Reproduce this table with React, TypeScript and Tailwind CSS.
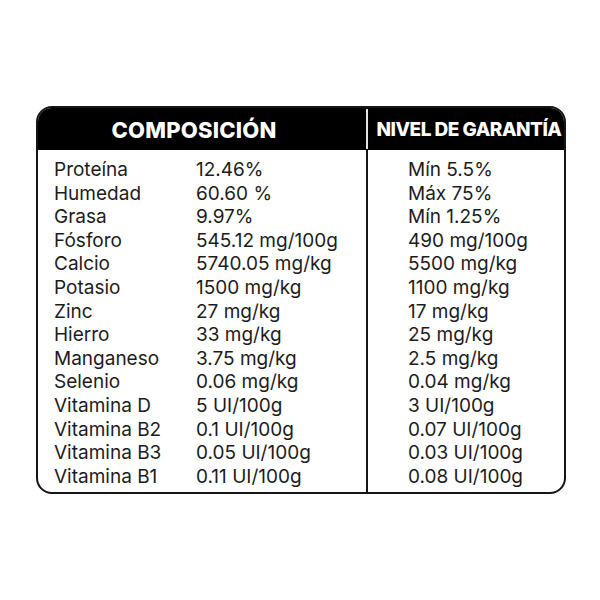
const rows: [string, string, string][] = [
  ["Proteína", "12.46%", "Mín 5.5%"],
  ["Humedad", "60.60 %", "Máx 75%"],
  ["Grasa", "9.97%", "Mín 1.25%"],
  ["Fósforo", "545.12 mg/100g", "490 mg/100g"],
  ["Calcio", "5740.05 mg/kg", "5500 mg/kg"],
  ["Potasio", "1500 mg/kg", "1100 mg/kg"],
  ["Zinc", "27 mg/kg", "17 mg/kg"],
  ["Hierro", "33 mg/kg", "25 mg/kg"],
  ["Manganeso", "3.75 mg/kg", "2.5 mg/kg"],
  ["Selenio", "0.06 mg/kg", "0.04 mg/kg"],
  ["Vitamina D", "5 UI/100g", "3 UI/100g"],
  ["Vitamina B2", "0.1 UI/100g", "0.07 UI/100g"],
  ["Vitamina B3", "0.05 UI/100g", "0.03 UI/100g"],
  ["Vitamina B1", "0.11 UI/100g", "0.08 UI/100g"],
]

export default function App() {
  return (
    <div className="w-[600px] h-[600px] bg-white pt-[106px] pl-[36px] font-['Inter',sans-serif] text-[#1c1c1c]">
      <div className="w-[530px] h-[388px] border-2 border-[#151515] rounded-[16px] overflow-hidden flex flex-col">
        <div className="flex h-[42px] bg-black text-white font-extrabold shrink-0">
          <div className="w-[328px] flex items-center justify-center pr-[16px] pt-[3px] text-[22px] tracking-[0.2px] whitespace-nowrap">
            COMPOSICIÓN
          </div>
          <div className="w-[2px] bg-[#e5e5e5] my-[1px]" />
          <div className="flex-1 flex items-center justify-center pl-[6px] pt-[3px] text-[19px] tracking-[-0.5px] whitespace-nowrap">
            NIVEL DE GARANTÍA
          </div>
        </div>
        <div className="flex flex-1 pt-[8px] text-[19px] leading-[23.6px]">
          <div className="w-[328px] pl-[16px]">
            {rows.map(([name, value]) => (
              <div key={name} className="flex">
                <span className="w-[142px]">{name}</span>
                <span>{value}</span>
              </div>
            ))}
          </div>
          <div className="w-[2px] bg-[#151515] -mt-[8px]" />
          <div className="flex-1 pl-[40px]">
            {rows.map(([name, , min]) => (
              <div key={name}>{min}</div>
            ))}
          </div>
        </div>
      </div>
    </div>
  )
}
